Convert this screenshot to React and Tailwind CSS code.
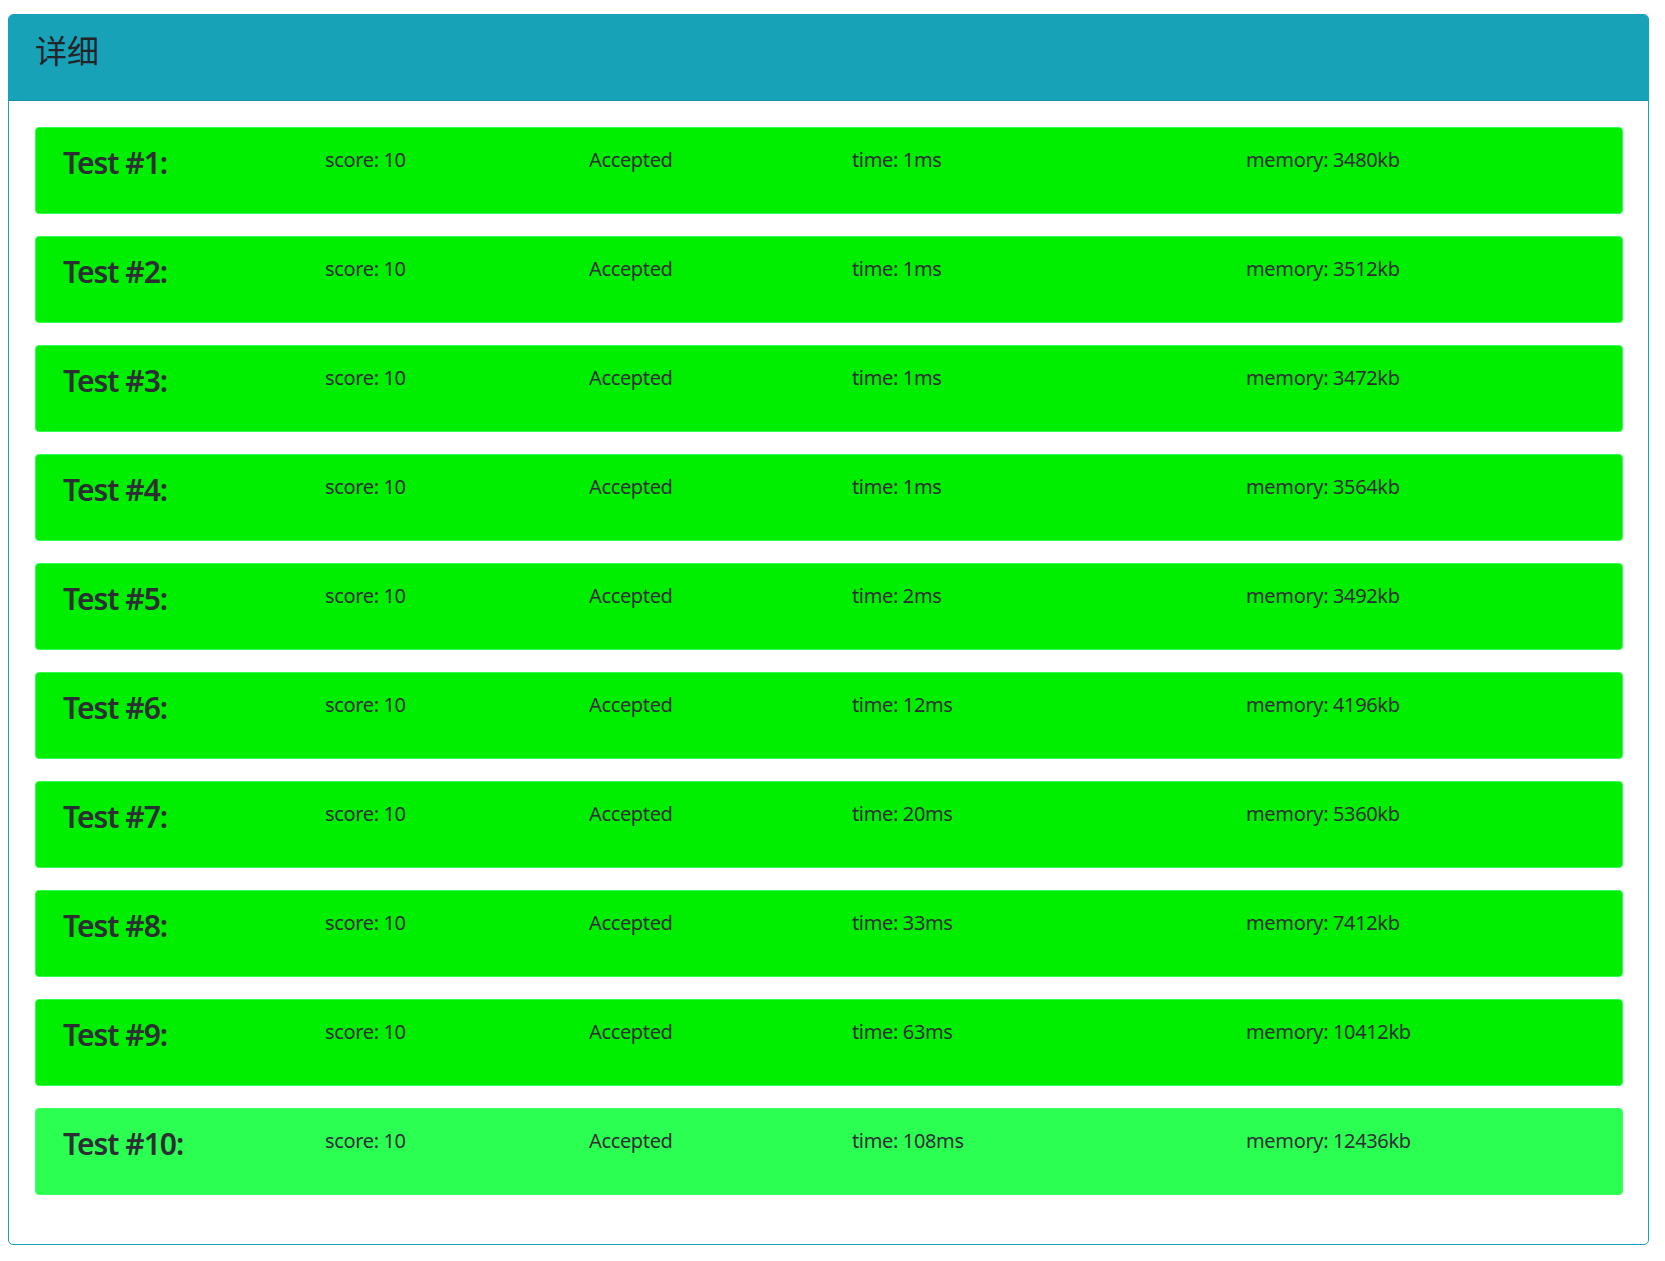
import React from "react";

const tests = [
    { id: 1, time: "1ms", memory: "3480kb" },
    { id: 2, time: "1ms", memory: "3512kb" },
    { id: 3, time: "1ms", memory: "3472kb" },
    { id: 4, time: "1ms", memory: "3564kb" },
    { id: 5, time: "2ms", memory: "3492kb" },
    { id: 6, time: "12ms", memory: "4196kb" },
    { id: 7, time: "20ms", memory: "5360kb" },
    { id: 8, time: "33ms", memory: "7412kb" },
    { id: 9, time: "63ms", memory: "10412kb" },
    { id: 10, time: "108ms", memory: "12436kb", light: true },
];

export default function App() {
    return (
        <div
            className="bg-white min-h-screen pl-[8px] pt-[14px] text-[#212529]"
            style={{ fontFamily: '"Noto Sans", "Noto Sans CJK SC", sans-serif' }}
        >
            <div className="w-[1641px] border border-[#17a2b8] rounded-[5px] overflow-hidden">
                {/* Header */}
                <div className="h-[86px] bg-[#17a2b8] border-b border-[#1492a6] pl-[26px] pt-[17px]">
                    <h3 className="text-[32px] leading-[38px] font-normal">详细</h3>
                </div>

                {/* Test rows */}
                <div className="pl-[26px] pr-[25px] pt-[26px] pb-[27px]">
                    {tests.map((t) => (
                        <div
                            key={t.id}
                            className={
                                t.light
                                    ? "h-[87px] mb-[22px] rounded-[4px] border border-[#3dff62] bg-[#2bff52] pl-[27px] pt-[17px] grid grid-cols-[262px_264px_263px_394px_1fr] items-start"
                                    : "h-[87px] mb-[22px] rounded-[4px] border border-[#33ff55] bg-[#00ee00] pl-[27px] pt-[17px] grid grid-cols-[262px_264px_263px_394px_1fr] items-start"
                            }
                        >
                            <h4 className="text-[30px] leading-[36px] font-semibold tracking-[-1px] text-[#2b2f33]">Test #{t.id}:</h4>
                            <div className="text-[20px] leading-[24px] mt-[3px] tracking-[-0.35px] text-[#2b2f33]">score: 10</div>
                            <div className="text-[20px] leading-[24px] mt-[3px] tracking-[-0.35px] text-[#2b2f33]">Accepted</div>
                            <div className="text-[20px] leading-[24px] mt-[3px] tracking-[-0.35px] text-[#2b2f33]">time: {t.time}</div>
                            <div className="text-[20px] leading-[24px] mt-[3px] tracking-[-0.35px] text-[#2b2f33]">memory: {t.memory}</div>
                        </div>
                    ))}
                </div>
            </div>
        </div>
    );
}
